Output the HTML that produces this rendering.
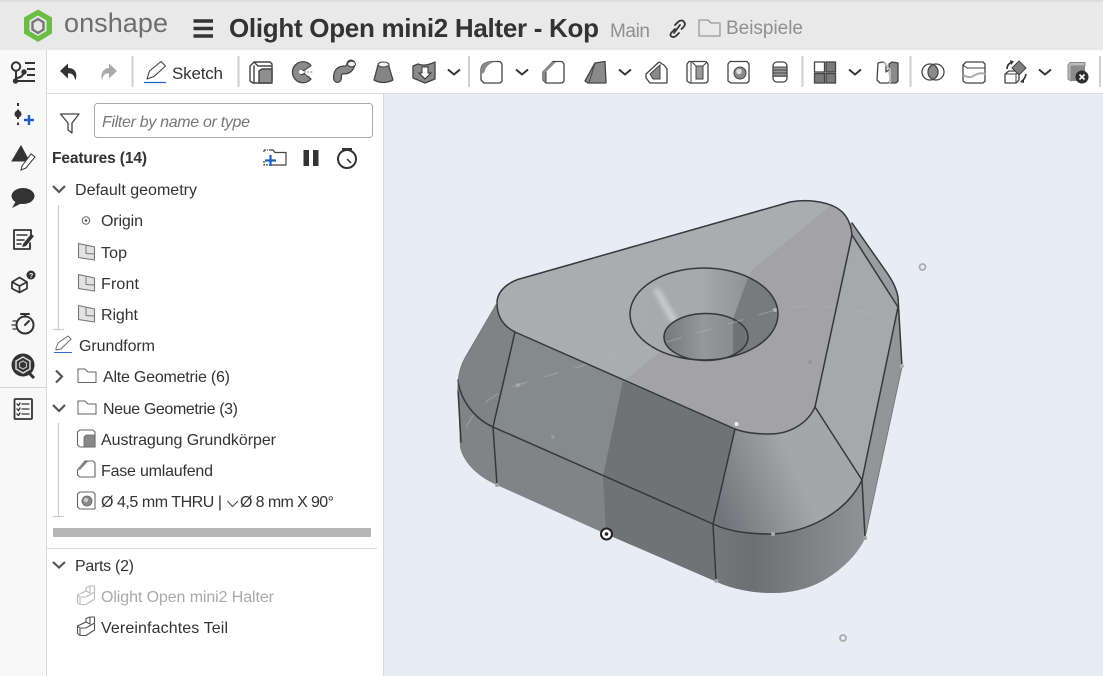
<!DOCTYPE html>
<html lang="de"><head><meta charset="utf-8"><title>Olight Open mini2 Halter - Kop</title>
<style>
html,body{margin:0;padding:0;background:#e8edf5;overflow:hidden}
svg{display:block}
text{font-family:"Liberation Sans","DejaVu Sans",sans-serif;fill:#333;font-size:16px}
.ic{fill:none;stroke:#444;stroke-width:1.4;stroke-linejoin:round;stroke-linecap:round}
.e{fill:none;stroke:#35383b;stroke-width:1.5;stroke-linejoin:round;stroke-linecap:round}
</style></head><body>
<svg width="1103" height="676" viewBox="0 0 1103 676" xmlns="http://www.w3.org/2000/svg">
<defs>
<linearGradient id="band" x1="713" y1="0" x2="865" y2="0" gradientUnits="userSpaceOnUse"><stop offset="0" stop-color="#74787a"/><stop offset=".25" stop-color="#6d7073"/><stop offset="1" stop-color="#8f9395"/></linearGradient>
<linearGradient id="corner" x1="715" y1="500" x2="860" y2="440" gradientUnits="userSpaceOnUse"><stop offset="0" stop-color="#72767a"/><stop offset=".55" stop-color="#a3a7a9"/><stop offset="1" stop-color="#a4a6a8"/></linearGradient>
<linearGradient id="cone" x1="630" y1="0" x2="750" y2="0" gradientUnits="userSpaceOnUse"><stop offset="0" stop-color="#a6abad"/><stop offset=".6" stop-color="#a5a9ab"/><stop offset="1" stop-color="#8e9294"/></linearGradient>
<linearGradient id="cyl" x1="664" y1="0" x2="735" y2="0" gradientUnits="userSpaceOnUse"><stop offset="0" stop-color="#74797c"/><stop offset=".55" stop-color="#94989b"/><stop offset="1" stop-color="#888c8e"/></linearGradient>
<clipPath id="topc"><path d="M497 303C497 290 510 281 523 278L790 202C805 199 825 201 837 208C847 214 851 224 852 235L815 407C808 423 790 434 770 434C757 434 745 433 735 429L515 332C503 326 497 316 497 303Z"/></clipPath>
<clipPath id="hc"><ellipse cx="704" cy="314" rx="74" ry="46"/></clipPath>
<clipPath id="cc"><ellipse cx="706" cy="337" rx="42" ry="23.500"/></clipPath>
<filter id="bl" x="-50%" y="-50%" width="200%" height="200%"><feGaussianBlur stdDeviation="2"/></filter>
</defs>

<rect width="1103" height="676" fill="#e8edf5"/>
<!-- top bar -->
<rect width="1103" height="50" fill="#e9e9e9"/>
<rect width="1103" height="2" fill="#dcdcdc"/>
<!-- logo -->
<path d="M38 9.500L52 17.500V33.500L38 42L24 33.500V17.500Z" fill="#6cbd45"/>
<path d="M38 15.500L46.500 20.500V31L38 36L29.500 31V20.500Z" fill="#e9e9e9"/>
<path d="M38 19L43.500 22.300V29.500L38 33L32.500 29.500V22.300Z" fill="none" stroke="#777" stroke-width="2.400"/>
<text x="64" y="32" textLength="104" style="font-size:27px;fill:#6e6e6e">onshape</text>
<!-- hamburger -->
<path d="M193.500 21H213M193.500 28.500H213M193.500 36H213" stroke="#333" stroke-width="3.500" fill="none"/>
<text x="229" y="37" textLength="370" style="font-size:26px;font-weight:bold;fill:#333">Olight Open mini2 Halter - Kop</text>
<text x="610" y="37" textLength="40" style="font-size:19px;fill:#8f8f8f">Main</text>
<!-- link icon -->
<g fill="none" stroke="#333" stroke-width="1.800" stroke-linecap="round">
<path d="M675 25L678 22C680 20 683 20 684 22C685.500 23.500 685 25.500 683.500 27L681.500 29"/>
<path d="M675 29L672 32C670 34 670 35.500 671.500 36.500C673 37.500 675 37 676.500 35.500L679 33"/>
<path d="M674 33L680 25"/>
</g>
<path d="M699 36V20H708L711 23H720V36Z" fill="none" stroke="#999" stroke-width="1.300" stroke-linejoin="round"/>
<text x="726" y="34" textLength="77" style="font-size:19px;fill:#8f8f8f">Beispiele</text>

<!-- left rail -->
<rect y="50" width="46" height="626" fill="#f8f8f8"/>
<rect x="46" y="50" width="1" height="626" fill="#d9d9d9"/>
<rect y="387" width="46" height="1" fill="#d5d5d5"/>
<!-- toolbar -->
<rect x="47" y="50" width="1056" height="43" fill="#fff"/>
<rect x="47" y="93" width="1056" height="1" fill="#dcdcdc"/>
<!-- panel -->
<rect x="47" y="94" width="336" height="582" fill="#fff"/>
<rect x="383" y="94" width="1" height="582" fill="#d9d9d9"/>

<!-- separators -->
<g fill="#cfcfcf"><rect x="131.500" y="56" width="2" height="31"/><rect x="237.500" y="56" width="2" height="31"/><rect x="468" y="56" width="2" height="31"/><rect x="801.500" y="56" width="2" height="31"/><rect x="909.500" y="56" width="2" height="31"/><rect x="1099" y="56" width="2" height="31"/></g>

<!-- rail icons -->
<g fill="none" stroke="#333" stroke-width="2">
<circle cx="16" cy="66.500" r="4.200"/>
<path d="M16 71V81M16 78C20 78 23 76 24 72"/>
<path d="M25 63H35M27 69H35M27 75H35M17 81H35"/>
</g>
<circle cx="15.500" cy="81" r="2.700" fill="#333"/><circle cx="24" cy="72" r="2.700" fill="#333"/>
<path d="M18 103V125" stroke="#333" stroke-width="2" stroke-dasharray="3 3.500"/>
<circle cx="18" cy="114" r="3.500" fill="#333"/>
<path d="M24 120H34M29 115V125" stroke="#1f5fbf" stroke-width="2.500"/>
<path d="M12 161L21 146L28 159L24 161Z" fill="#333" stroke="#333" stroke-width="1"/>
<path d="M22 166L31 154L35 157L26 168L21 170Z" fill="#fff" stroke="#333" stroke-width="1"/>
<ellipse cx="23" cy="196" rx="11.500" ry="8" fill="#333"/><path d="M16 201L12 208L22 203Z" fill="#333"/>
<g class="ic" style="stroke:#333;stroke-width:1.800"><path d="M30 243V249H14V230H31V236"/><path d="M17 235H27M17 240H24M17 244H21" stroke-width="1.500"/></g>
<path d="M23 244L31 234L34 236L26 246L22 247Z" fill="#333"/>
<g class="ic" style="stroke:#333;stroke-width:1.700"><path d="M12 282L19.500 277.500L27 282V288.500L19.500 292.500L12 288.500ZM12 282L19.500 286L27 282M19.500 286V292.500"/></g>
<circle cx="31" cy="275" r="4.500" fill="#333"/><text x="29" y="278" style="font-size:7px;font-weight:bold;fill:#fff">?</text>
<g class="ic" style="stroke:#333;stroke-width:2"><circle cx="25" cy="325" r="8.500"/><path d="M21 314H29M25 314V316M25 325L29 321"/><path d="M13 321H16M12 325H15M13 329H16" stroke-width="1.300"/></g>
<circle cx="23" cy="365" r="11.500" fill="#333"/><path d="M29 373L34 378" stroke="#333" stroke-width="3"/>
<path d="M23 357L30 361V369L23 373L16 369V361Z" fill="none" stroke="#ddd" stroke-width="1.500"/><path d="M23 361L26.500 363V367L23 369L19.500 367V363Z" fill="none" stroke="#bbb" stroke-width="1.200"/>
<g class="ic" style="stroke:#333;stroke-width:1.800"><rect x="14.500" y="399" width="17.500" height="20" rx="1"/><path d="M22 404H29M22 409H29M22 414H29M17 404L18.500 405.500L20 403M17 409L18.500 410.500L20 408M17 414L18.500 415.500L20 413" stroke-width="1.300"/></g>

<!-- undo/redo -->
<path d="M60 71L68 63.500V68C75 68 78 73 75.500 80.500C74 75 72 73 68 73.500V78.500Z" fill="#333"/>
<path d="M117 71L109 63.500V68C104 68 100 73 102 80.500C103 75 105 73 109 73.500V78.500Z" fill="#aaa"/>
<!-- sketch -->
<path d="M147 79L149.500 71L161 61.500L165.500 66L154 76.500L147 79Z" fill="#fff" stroke="#444" stroke-width="1.100" stroke-linejoin="round"/>
<path d="M144 82.500H166" stroke="#1f5fbf" stroke-width="1.300"/>
<text x="172" y="79" textLength="51" style="font-size:17px;fill:#333">Sketch</text>

<!-- extrude -->
<g class="ic"><path d="M254 62H270L272 64V81L270 83H253L250 81V66Z" fill="#fff"/><path d="M254 62L258 66H272M254 66V83"/><path d="M259 71L262 69H272V83H259Z" fill="#8e8e8e"/></g>
<!-- revolve -->
<path d="M311 65.500A10.500 10.500 0 1 0 311 79L304 73.500Q301.500 76 300 73Q299 70 304 70.500Z" fill="#8a8a8a" stroke="#444" stroke-width="1.300" stroke-linejoin="round"/>
<circle cx="301" cy="72" r="2" fill="#fff"/>
<path d="M304 72H313M305 69L310 67M305 75L310 77" stroke="#777" stroke-width="1" stroke-dasharray="2 1.200"/>
<!-- sweep -->
<path d="M337.500 78.500V77C337.500 72 340 70 344 70C348 70 350 68 351 64" fill="none" stroke="#444" stroke-width="9" stroke-linecap="round"/>
<path d="M337.500 78.500V77C337.500 72 340 70 344 70C348 70 350 68 351 64" fill="none" stroke="#8a8a8a" stroke-width="6.500" stroke-linecap="round"/>
<ellipse cx="351.500" cy="64" rx="4" ry="2.800" fill="#f2f2f2" stroke="#444" stroke-width="1.100"/>
<!-- loft -->
<path d="M378 65L374 80Q383 85 393 80L388.500 65Z" fill="#858585" stroke="#444" stroke-width="1.300" stroke-linejoin="round"/>
<ellipse cx="383.500" cy="64.500" rx="5.500" ry="2.500" fill="#f5f5f5" stroke="#444" stroke-width="1.100"/>
<!-- thicken -->
<path d="M413 66L418 64Q425 67 435 62V79L425 83L413 78Z" fill="#8a8a8a" stroke="#444" stroke-width="1.300" stroke-linejoin="round"/>
<path d="M422 67H428V73H431L425 79L419 73H422Z" fill="#fff" stroke="#333" stroke-width="1"/>
<!-- chevrons -->
<g fill="none" stroke="#333" stroke-width="2"><path d="M448 69.500L454 74.500L460 69.500"/><path d="M516 69.500L522 74.500L528 69.500"/><path d="M619 69.500L625 74.500L631 69.500"/><path d="M849 69.500L855 74.500L861 69.500"/><path d="M1039 69.500L1045 74.500L1051 69.500"/></g>
<!-- fillet -->
<path d="M481 70Q481 62 493 61.500H500L502 64V81L500 83H484L481 80Z" fill="#fff" stroke="#444" stroke-width="1.300" stroke-linejoin="round"/>
<path d="M481 70Q481 62 492 61.500H496Q486 64 484.500 72L481 75Z" fill="#8a8a8a"/>
<!-- chamfer -->
<path d="M543 72L553 61.500H562L564 64V81L562 83H546L543 80Z" fill="#fff" stroke="#444" stroke-width="1.300" stroke-linejoin="round"/>
<path d="M543 71L552 62H556L546 72V83L543 80Z" fill="#8a8a8a"/><path d="M546 72V83" stroke="#444"/>
<!-- draft -->
<path d="M585 81L595 63L605 61.500L606 83H588Z" fill="#8a8a8a" stroke="#444" stroke-width="1.300" stroke-linejoin="round"/>
<path d="M595 63L589 83" stroke="#444" stroke-width="1"/>
<!-- rib -->
<path d="M646 74L659 62L664 65L667 69V83H650L646 78Z" fill="#fff" stroke="#444" stroke-width="1.300" stroke-linejoin="round"/>
<path d="M650 74L660 65V79H653Z" fill="#8a8a8a" stroke="#444" stroke-width="1"/>
<!-- shell -->
<path d="M689 61.500H706L708 64V81L706 83H690L687 81V64Z" fill="#fff" stroke="#444" stroke-width="1.300" stroke-linejoin="round"/>
<path d="M691 62V83M692 62L696 66H703L707 62" fill="none" stroke="#444" stroke-width="1"/>
<rect x="696" y="66" width="7" height="13" fill="#9a9a9a" stroke="#444" stroke-width="1"/>
<!-- hole -->
<path d="M730 61.500H747L749 64V81L747 83H731L728 81V64Z" fill="#fff" stroke="#444" stroke-width="1.300" stroke-linejoin="round"/>
<circle cx="740" cy="73" r="6" fill="#8a8a8a" stroke="#444" stroke-width="1"/><circle cx="739" cy="71.500" r="2.800" fill="#ddd"/>
<!-- thread -->
<rect x="773" y="62" width="14" height="20" rx="4" fill="#fff" stroke="#444" stroke-width="1.300"/>
<rect x="773.500" y="67" width="13" height="10" fill="#999"/>
<path d="M773 67H787M773 70H787M773 73H787M773 76H787" stroke="#444" stroke-width="1.100"/>
<!-- pattern -->
<g stroke="#444" stroke-width="1.300"><rect x="814.500" y="62" width="10" height="10" fill="#fff"/><rect x="826" y="62" width="9.500" height="10" fill="#7a7a7a"/><rect x="814.500" y="73.500" width="10" height="9.500" fill="#7a7a7a"/><rect x="826" y="73.500" width="9.500" height="9.500" fill="#7a7a7a"/></g>
<!-- mirror -->
<path d="M878 63L883 62L886 64V72L891 68V81L888 83H880L877 80Z" fill="#fff" stroke="#444" stroke-width="1.300" stroke-linejoin="round"/>
<path d="M889 64L892 62L898 63V81L896 83H890Z" fill="#8a8a8a" stroke="#444" stroke-width="1.300" stroke-linejoin="round"/>
<path d="M884 62L890 70V83" fill="none" stroke="#bbb" stroke-width="2"/>
<!-- boolean -->
<circle cx="930" cy="72" r="8" fill="#fff" stroke="#444" stroke-width="1.300"/>
<circle cx="936" cy="72" r="8" fill="none" stroke="#444" stroke-width="1.300"/>
<path d="M933 64.600A8 8 0 0 1 933 79.400A8 8 0 0 1 933 64.600Z" fill="#8a8a8a" stroke="#444" stroke-width="1"/>
<!-- split -->
<path d="M963 65L966 62H983L985 64V81L983 83H966L963 81Z" fill="#fff" stroke="#444" stroke-width="1.300" stroke-linejoin="round"/>
<path d="M963 65L967 68H985" fill="none" stroke="#444" stroke-width="1"/>
<path d="M963 75Q970 79 975 75Q980 72 986 74" fill="none" stroke="#aaa" stroke-width="2"/>
<!-- transform -->
<path d="M1005 74L1009 71H1019V80L1016 83H1005Z" fill="#fff" stroke="#444" stroke-width="1.300" stroke-linejoin="round"/>
<path d="M1005 74H1016V83M1016 74L1019 71" fill="none" stroke="#444" stroke-width="1"/>
<path d="M1019 61L1026 68L1019 75L1012 68Z" fill="#808080" stroke="#444" stroke-width="1"/>
<path d="M1007 69Q1007 64 1012 62" fill="none" stroke="#333" stroke-width="1.700"/><path d="M1010 60L1014 61.500L1011 65Z" fill="#333"/>
<path d="M1026 74Q1025 79 1022 81" fill="none" stroke="#333" stroke-width="1.700"/><path d="M1024 83L1020 82L1024 78Z" fill="#333"/>
<!-- delete -->
<path d="M1068 65L1070 62.500H1085V66H1071V81L1068 79Z" fill="#bbb" stroke="#888" stroke-width="1"/>
<rect x="1071" y="66" width="14" height="15" fill="#8c8c8c"/>
<circle cx="1082" cy="77" r="6.500" fill="#2e2e2e"/>
<path d="M1079.500 74.500L1084.500 79.500M1084.500 74.500L1079.500 79.500" stroke="#fff" stroke-width="1.600"/>

<!-- filter -->
<path d="M60.500 114H79L72 123V133L68 130V123Z" fill="none" stroke="#444" stroke-width="1.300" stroke-linejoin="round"/>
<rect x="94.500" y="103.500" width="278" height="34" rx="3" fill="#fff" stroke="#aaa"/>
<text x="102" y="127" textLength="148" style="font-size:16px;font-style:italic;fill:#777">Filter by name or type</text>
<text x="52" y="163" textLength="95" style="font-size:15.500px;font-weight:bold;fill:#333">Features (14)</text>
<!-- features icons -->
<path d="M269 150H273L275 152.500H286V165H269" fill="none" stroke="#444" stroke-width="1.200"/>
<path d="M264 150H268M264 150V153M264 161V165H268" fill="none" stroke="#444" stroke-width="1.200" stroke-dasharray="2 1"/>
<path d="M265 160.500H276M270.500 155V166" stroke="#1f5fbf" stroke-width="2.200"/>
<rect x="303.500" y="150" width="5.500" height="16" fill="#333"/><rect x="313" y="150" width="5.500" height="16" fill="#333"/>
<g fill="none" stroke="#333" stroke-width="2"><circle cx="347" cy="159" r="9"/><path d="M342 149H352M347 149V151"/><path d="M347 159L351 163" stroke-width="1.500"/></g>

<!-- tree lines -->
<g stroke="#ccc" stroke-width="1.200" fill="none"><path d="M58.500 205V329M53 329.500H64M58.500 423V516M53 516.500H64"/></g>
<!-- chevrons tree -->
<g fill="none" stroke="#555" stroke-width="2.200"><path d="M53 186L59 192L65 186"/><path d="M53 405L59 411L65 405"/><path d="M56 370.500L62 376.500L56 382.500"/></g>
<path d="M53 562L59 567.500L65 562" fill="none" stroke="#555" stroke-width="2.200"/>

<text x="75" y="195" textLength="122">Default geometry</text>
<circle cx="86" cy="220.500" r="3.700" fill="none" stroke="#666"/><circle cx="86" cy="220.500" r="1.300" fill="#555"/>
<text x="101" y="226" textLength="42">Origin</text>
<g fill="#e2e2e2" stroke="#777" stroke-width="1.100">
<path d="M78.500 243.500L94.500 247V260L78.500 257.500Z"/><path d="M78.500 274.500L94.500 278V291L78.500 288.500Z"/><path d="M78.500 305.500L94.500 309V322L78.500 319.500Z"/></g>
<path d="M86 245V253.500L94.500 254M86 276V284.500L94.500 285M86 307V315.500L94.500 316" fill="none" stroke="#777"/>
<text x="101" y="258" textLength="26">Top</text>
<text x="101" y="289" textLength="38">Front</text>
<text x="101" y="320" textLength="37">Right</text>
<path d="M56 348L58 343L68 336L71 339L61 349L56 350Z" fill="#fff" stroke="#666" stroke-width=".9" stroke-linejoin="round"/>
<path d="M54 352.500H72" stroke="#2f6fc9" stroke-width="1"/>
<text x="79" y="351" textLength="76">Grundform</text>
<path d="M78 382.500V369H85L88 372H96V382.500Z" fill="none" stroke="#666" stroke-width="1"/>
<text x="103" y="382" textLength="127">Alte Geometrie (6)</text>
<path d="M78 414V401H85L88 404H96V414Z" fill="none" stroke="#666" stroke-width="1"/>
<text x="103" y="414" textLength="135">Neue Geometrie (3)</text>
<!-- small feature icons -->
<path d="M80 430H93L95 432V447H80L77.500 445V432Z" fill="#fff" stroke="#666" stroke-width="1.100"/>
<path d="M84 437L86 435H95V447H84Z" fill="#888" stroke="#666" stroke-width=".8"/>
<text x="101" y="445" textLength="175">Austragung Grundkörper</text>
<path d="M77.500 470L85 461H93L95 463V477H80L77.500 475Z" fill="#fff" stroke="#666" stroke-width="1.100"/>
<path d="M78 469L85 461.500H88L80 470Z" fill="#888"/>
<text x="101" y="476" textLength="112">Fase umlaufend</text>
<path d="M80 492H93L95 494V509H80L77.500 507V494Z" fill="#fff" stroke="#666" stroke-width="1.100"/>
<circle cx="87" cy="501" r="5" fill="#888" stroke="#666" stroke-width=".8"/><circle cx="86" cy="500" r="2.200" fill="#ccc"/>
<text x="101" y="507" textLength="121">Ø 4,5 mm THRU |</text>
<path d="M227.500 501L232.500 506.500L238 501" fill="none" stroke="#444" stroke-width="1"/>
<text x="240" y="507" textLength="94">Ø 8 mm X 90°</text>

<rect x="53" y="528" width="318" height="9" fill="#b6b6b6"/>
<rect x="47" y="548" width="330" height="1" fill="#dcdcdc"/>
<text x="75" y="571" textLength="59">Parts (2)</text>
<g fill="#fff" stroke="#bbb" stroke-width="1.100" stroke-linejoin="round">
<path d="M77.500 595L86 591V587.500L90 586H94.500V599L86 604.500H80L77.500 602.500Z"/><path d="M77.500 595L80 597V604.500M80 597H86L94.500 592M86 591L90 593V586" fill="none"/></g>
<text x="101" y="602" textLength="173" style="font-size:16px;fill:#a9a9a9">Olight Open mini2 Halter</text>
<g fill="#fff" stroke="#555" stroke-width="1.100" stroke-linejoin="round">
<path d="M77.500 626L86 622V618.500L90 617H94.500V630L86 635.500H80L77.500 633.500Z"/><path d="M77.500 626L80 628V635.500M80 628H86L94.500 623M86 622L90 624V617" fill="none"/></g>
<text x="101" y="633" textLength="127">Vereinfachtes Teil</text>

<!-- viewport circles -->
<circle cx="922.500" cy="267" r="3" fill="#e8edf5" stroke="#aaa" stroke-width="1.800"/>
<circle cx="843" cy="638" r="3" fill="#e8edf5" stroke="#aaa" stroke-width="1.800"/>

<!-- MODEL -->
<path d="M497 303L465 358Q457 372 458 392L460 447C463 462 478 477 497 485L717 582C735 590 755 593 772 593C795 593 815 587 832 575C848 564 860 550 865 538L902 367L898 297C896 286 890 277 885 270L852 223Z" fill="#85898c"/>
<path d="M497 303L465 358Q457 372 458 392C462 408 480 421 493 427L515 332C503 326 497 316 497 303Z" fill="#7f8386"/>
<path d="M515 332L623 381L603 476L493 427Z" fill="#858a8d"/>
<path d="M623 381L735 429L713 524L603 476Z" fill="#6f7375"/>
<path d="M458 392C462 408 480 421 493 427L497 485C478 477 463 462 460 447Z" fill="#808487"/>
<path d="M493 427L603 476L606 534L497 485Z" fill="#808487"/>
<path d="M603 476L713 524L717 582L606 534Z" fill="#707275"/>
<path d="M713 524C730 532 750 534 773 534C805 532 845 515 862 480L865 538C860 550 848 564 832 575C815 587 795 593 772 593C755 593 735 590 717 582Z" fill="url(#band)"/>
<path d="M735 429C745 433 757 434 770 434C790 434 808 423 815 407L862 480C845 515 805 532 773 534C750 534 730 532 713 524Z" fill="url(#corner)"/>
<path d="M852 235L898 307L862 480L815 407Z" fill="#a5a9ab"/>
<path d="M852 223L885 270C890 277 896 286 898 297V307L852 235Z" fill="#989da0"/>
<path d="M898 307L902 367L865 538L862 480Z" fill="#929699"/>
<!-- top face -->
<path d="M497 303C497 290 510 281 523 278L790 202C805 199 825 201 837 208C847 214 851 224 852 235L815 407C808 423 790 434 770 434C757 434 745 433 735 429L515 332C503 326 497 316 497 303Z" fill="#a9adb0"/>
<g clip-path="url(#topc)"><path d="M830 206L752 270L730 340L660 352L620 384L735 440H830L860 220Z" fill="#a3a2a4"/></g>
<!-- hole -->
<ellipse cx="704" cy="314" rx="74" ry="46" fill="url(#cone)"/>
<g clip-path="url(#hc)">
<path d="M653 290L659 288L678 320L671 323Z" fill="#c6cbcd" filter="url(#bl)"/>
<path d="M750 272L732 322L733 365H790V260Z" fill="#777b7d"/>
</g>
<ellipse cx="706" cy="337" rx="42" ry="23.500" fill="url(#cyl)"/>
<g clip-path="url(#cc)"><rect x="733" y="310" width="20" height="55" fill="#6f7375"/></g>
<ellipse cx="704" cy="314" rx="74" ry="46" class="e"/>
<ellipse cx="706" cy="337" rx="42" ry="23.500" class="e"/>
<!-- dashed curve -->
<path d="M466 428C476 405 497 392 518 385C570 368 650 348 775 310C810 302 860 306 895 325" fill="none" stroke="#b6b9ba" stroke-width="1.200" stroke-dasharray="16 16" opacity=".45"/>
<!-- edges -->
<path class="e" d="M497 303C497 290 510 281 523 278L790 202C805 199 825 201 837 208C847 214 851 224 852 235L815 407C808 423 790 434 770 434C757 434 745 433 735 429L515 332C503 326 497 316 497 303Z"/>
<path class="e" d="M852 223L885 270C890 277 896 286 898 297L902 367"/>
<path class="e" d="M852 235L898 307L862 480L815 407"/>
<path class="e" d="M515 332L493 427L497 485M461 442L458 390"/>
<path class="e" d="M458 380C460 400 475 419 493 427L713 524C730 532 750 534 773 534C805 532 845 515 862 480L865 537"/>
<path class="e" d="M735 429L713 524L716 580"/>
<path d="M497 303L465 358Q457 372 458 392M865 538L902 367" fill="none" stroke="#6d7174" stroke-width=".8"/>
<!-- vertices -->
<circle cx="736.500" cy="424" r="2" fill="#eee"/>
<circle cx="773" cy="534" r="2" fill="#aaa"/>
<circle cx="716.500" cy="581" r="2" fill="#a2a2a2"/>
<circle cx="865" cy="538" r="2" fill="#a2a2a2"/>
<circle cx="902" cy="366" r="2" fill="#b0b0b0"/>
<circle cx="497" cy="485" r="2" fill="#a2a2a2"/>
<circle cx="518" cy="385" r="2" fill="#a9a9a9"/>
<circle cx="553" cy="437" r="2" fill="#999c9e"/>
<circle cx="775" cy="310" r="2" fill="#b5b5b5"/>
<circle cx="810" cy="362" r="2" fill="#969698"/>
<circle cx="606.500" cy="534" r="5.500" fill="#fff" stroke="#222" stroke-width="2"/>
<circle cx="606.500" cy="534" r="1.800" fill="#222"/>
</svg>
</body></html>
